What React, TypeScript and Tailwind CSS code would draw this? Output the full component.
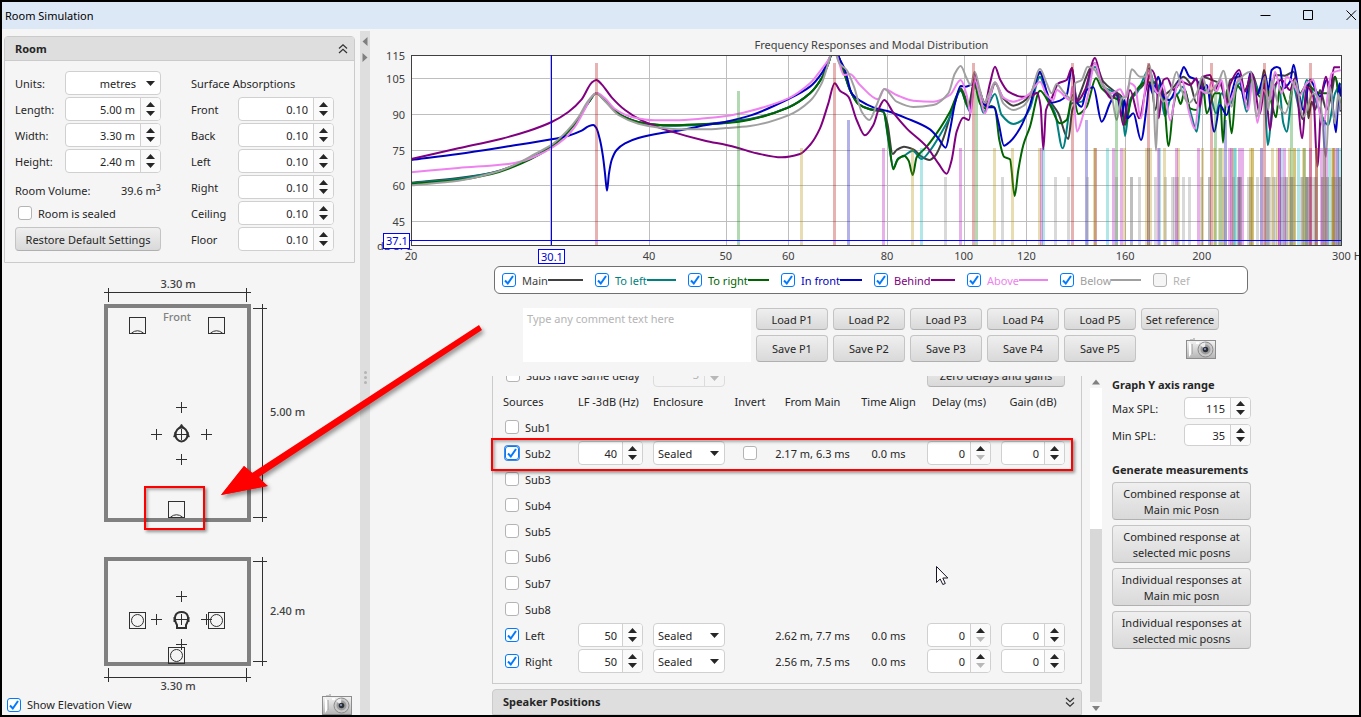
import { useState, type ReactNode } from "react";

/* ---------- controls ---------- */

function Tri({ dir, dim }: { dir: "up" | "down"; dim?: boolean }) {
  return (
    <svg width="9" height="5" viewBox="0 0 9 5" className="block" aria-hidden="true">
      <path d={dir === "up" ? "M0 5L4.5 0L9 5Z" : "M0 0L4.5 5L9 0Z"} fill={dim ? "#b8b8b8" : "#262626"} />
    </svg>
  );
}

function Spinner({ label, value, size, downOff }: { label: string; value: string; size: string; downOff?: boolean }) {
  const [text, setText] = useState(value);
  return (
    <span className={`flex overflow-hidden rounded border border-[#d0d0d0] bg-white ${size}`}>
      <input
        aria-label={label}
        value={text}
        onChange={(e) => setText(e.target.value)}
        className="w-full min-w-0 flex-1 bg-transparent pt-px pr-[5px] text-right outline-none"
      />
      <span className="flex w-5 shrink-0 flex-col items-center justify-center gap-1 border-l border-[#d0d0d0] bg-[#fafafa]">
        <button aria-label={`${label} up`}><Tri dir="up" /></button>
        <button aria-label={`${label} down`}><Tri dir="down" dim={downOff} /></button>
      </span>
    </span>
  );
}

function Picker({ label, value, options, size, right }: { label: string; value: string; options: string[]; size: string; right?: boolean }) {
  return (
    <span className={`relative flex items-center rounded border border-[#d0d0d0] bg-white ${size}`}>
      <select
        aria-label={label}
        defaultValue={value}
        className={`h-full w-full appearance-none bg-transparent pt-px outline-none ${right ? "pr-6 [text-align-last:right]" : "pl-1"}`}
      >
        {options.map((o) => <option key={o}>{o}</option>)}
      </select>
      <span className="pointer-events-none absolute right-[5px]"><Tri dir="down" /></span>
    </span>
  );
}

function Check({ on, children, label, tone, disabled, focus }: { on?: boolean; children?: ReactNode; label?: string; tone?: string; disabled?: boolean; focus?: boolean }) {
  const [checked, setChecked] = useState(!!on);
  return (
    <label className={`flex items-center gap-1.5 whitespace-nowrap ${tone ?? ""}`}>
      <span className={`relative flex h-3.5 w-3.5 shrink-0 rounded-[3px] ${focus ? "ring-1 ring-[#4a86d8]" : ""}`}>
        <input
          type="checkbox"
          aria-label={label}
          disabled={disabled}
          checked={checked}
          onChange={(e) => setChecked(e.target.checked)}
          className="h-3.5 w-3.5 appearance-none rounded-[3px] border border-[#b4b4b4] bg-white checked:border-[#007aff] disabled:bg-[#f5f5f5]"
        />
        {checked && (
          <svg viewBox="0 0 14 14" className="pointer-events-none absolute h-3.5 w-3.5" fill="none" stroke="#007aff" strokeWidth="2" aria-hidden="true">
            <path d="M3 7.5L5.8 10.5L11 3" />
          </svg>
        )}
      </span>
      {children && <span className="pt-px">{children}</span>}
    </label>
  );
}

function Btn({ children, className }: { children: ReactNode; className: string }) {
  return (
    <button className={`rounded border border-[#c4c4c4] border-b-[#b0b0b0] bg-linear-to-b from-[#efefef] to-[#d9d9d9] pt-px whitespace-nowrap ${className}`}>
      {children}
    </button>
  );
}

function Camera() {
  return (
    <svg width="30" height="21" viewBox="0 0 30 21" aria-hidden="true">
      <defs>
        <linearGradient id="cam" x1="0" y1="0" x2="0" y2="1">
          <stop offset="0" stopColor="#f4f4f4" />
          <stop offset="1" stopColor="#b4b4b4" />
        </linearGradient>
      </defs>
      <path d="M4 1h3v-1h2v2h-5z" fill="#c4c4c4" />
      <rect x="0.5" y="2.5" width="29" height="18" fill="url(#cam)" stroke="#8c8c8c" />
      <path d="M3 4v15L6 15V7Z" fill="#fff" />
      <path d="M6 6v10" stroke="#9a9a9a" />
      <rect x="10" y="4" width="3" height="2" fill="#fff" />
      <circle cx="19.5" cy="11.5" r="7.5" fill="#c9c9c9" stroke="#8a8a8a" />
      <circle cx="19.5" cy="11.5" r="5" fill="#9c9c9c" />
      <path d="M19.5 11.5L14 7A7 7 0 0 1 19 4.500Z" fill="#ececec" />
      <circle cx="19.5" cy="11.5" r="2.800" fill="#2c3038" />
      <circle cx="19" cy="11" r="1" fill="#8fa4c8" />
    </svg>
  );
}

function Chevrons({ up }: { up?: boolean }) {
  return (
    <svg width="10" height="10" viewBox="0 0 10 10" fill="none" stroke="#333" strokeWidth="1.2" aria-hidden="true">
      <path d={up ? "M1 4.5L5 0.8L9 4.5M1 9L5 5.300L9 9" : "M1 1L5 4.700L9 1M1 5.500L5 9.200L9 5.500"} />
    </svg>
  );
}

/* ---------- frequency response chart ---------- */

type Pt = [number, number];

const parse = (s: string, dx: number): Pt[] =>
  s.trim().split(/\s+/).map((p) => {
    const [x, y] = p.split(",").map(Number);
    return [x + dx, y];
  });

/* Horizontal-tangent-limited cubic so that notches stay sharp without overshoot. */
function smooth(p: Pt[]): string {
  const n = p.length;
  const d = p.slice(1).map((q, i) => (q[1] - p[i][1]) / (q[0] - p[i][0] || 1));
  const m = p.map((_, i) => {
    if (i === 0) return d[0];
    if (i === n - 1) return d[n - 2];
    if (d[i - 1] * d[i] <= 0) return 0;
    return (2 * d[i - 1] * d[i]) / (d[i - 1] + d[i]);
  });
  let out = `M${p[0][0]} ${p[0][1]}`;
  for (let i = 0; i < n - 1; i++) {
    const h = (p[i + 1][0] - p[i][0]) / 3;
    out += `C${p[i][0] + h} ${p[i][1] + m[i] * h} ${p[i + 1][0] - h} ${p[i + 1][1] - m[i + 1] * h} ${p[i + 1][0]} ${p[i + 1][1]}`;
  }
  return out;
}

const CURVES: { name: string; color: string; low: string; mid: string; high: string }[] = [
  {
    name: "Main", color: "#404040",
    low: "108,458 250,444 350,428 440,397 530,348 600,280 640,218 664,190 690,212 740,257 800,278 880,286",
    mid: "15,283 79,275 150,267 265,232 330,190 365,145 385,100 395,70 405,58 415,78 430,120 450,180 475,222 510,238 550,245 562,280 578,372 590,360 612,350 640,358 665,380 688,390 705,378 730,325 750,260 770,200 782,175 795,200 808,230 824,150 840,190 855,228 870,200 885,160 910,205 940,227 970,215",
    high: "0,195 30,130 55,205 85,250 115,327 127,240 140,215 195,100 220,155 255,185 275,200 285,280 305,200 340,165 358,115 376,240 390,170 400,195 425,178 460,140 480,160 500,220 517,140 545,150 570,160 590,210 600,150 630,140 650,230 665,130 690,190 702,120 720,210 735,135 765,137 791,125 808,225 818,268 830,180 835,265 845,215 855,240 870,180 890,240 905,190 915,140 932,245",
  },
  {
    name: "To left", color: "#008080",
    low: "108,460 250,446 350,429 440,398 530,349 600,281 640,218 664,190 690,212 740,257 800,279 880,287",
    mid: "15,284 79,278 150,268 265,232 330,190 365,145 385,100 395,70 405,58 415,78 430,120 450,180 475,222 510,238 550,245 565,330 580,412 595,385 612,378 638,362 665,387 690,362 720,315 750,260 782,182 800,225 810,245 824,160 840,215 850,248 865,225 885,192 905,255 940,282 965,272",
    high: "0,235 30,140 50,200 75,250 98,355 125,220 155,215 195,110 220,170 258,190 275,210 285,318 300,210 320,190 358,120 380,190 390,160 400,240 405,258 420,210 430,200 445,190 458,170 485,260 500,305 515,200 535,175 558,250 575,190 595,230 630,160 650,245 668,150 690,190 702,160 713,345 730,200 745,150 760,280 770,305 790,170 810,240 830,150 860,220 895,285 915,190 932,160",
  },
  {
    name: "To right", color: "#006400",
    low: "108,462 250,450 350,432 440,400 530,350 600,281 640,218 664,190 690,212 740,257 800,278 880,286",
    mid: "15,282 79,279 150,269 265,233 330,190 365,145 385,100 395,70 405,58 415,78 430,120 450,180 475,222 510,238 550,245 566,330 580,418 592,390 612,377 626,392 638,435 650,382 680,350 720,295 750,245 782,180 805,230 822,160 840,220 855,235 875,228 885,235 898,330 912,380 930,388 944,498 955,420 970,345",
    high: "0,290 30,182 60,225 90,280 110,270 128,195 145,252 170,230 198,145 215,175 245,200 275,215 285,285 305,205 350,155 370,160 385,145 400,190 416,348 430,230 440,195 452,222 465,180 480,235 500,240 517,150 530,250 555,190 570,190 579,338 590,180 605,310 620,165 640,185 665,150 690,200 705,150 725,220 738,262 750,170 775,225 791,150 810,190 830,165 870,190 895,190 915,140 932,230",
  },
  {
    name: "In front", color: "#0000c0",
    low: "108,390 250,372 400,349 530,328 580,317 620,302 640,289 655,285 664,294 675,330 684,380 690,430 696,482 702,430 710,390 725,360 750,340 790,324 860,309 920,300",
    mid: "15,286 79,275 150,257 265,207 330,170 365,130 385,92 395,70 405,55 418,85 435,120 455,190 480,212 520,232 562,243 620,265 690,298 715,325 737,353 750,300 765,220 782,168 797,170 812,165 824,155 838,180 852,220 865,232 882,232 895,275 912,347 930,335 960,295",
    high: "0,225 30,125 50,185 65,218 90,212 110,195 126,115 140,215 155,230 170,180 190,172 215,275 240,220 258,190 265,210 275,260 283,210 292,265 310,250 333,330 350,230 358,160 368,190 385,140 400,200 418,210 440,170 455,125 461,111 478,140 500,150 517,180 530,165 553,305 570,225 590,255 605,190 625,130 645,215 662,125 680,195 705,135 715,180 725,120 740,111 750,115 760,175 780,155 791,104 805,180 820,240 840,150 870,200 890,150 905,200 918,307 928,160 932,200",
  },
  {
    name: "Behind", color: "#800080",
    low: "108,387 250,355 380,326 460,303 530,276 580,246 620,208 650,158 664,150 680,163 710,202 750,240 800,271 880,302",
    mid: "15,332 79,345 112,353 170,370 245,382 300,372 330,345 360,295 385,220 404,160 420,182 445,200 470,270 495,316 520,285 537,235 553,210 580,248 620,295 680,350 715,400 740,431 755,390 770,305 790,263 807,270 824,130 838,180 855,218 870,160 885,110 900,148 925,185 965,200",
    high: "0,200 22,188 32,230 40,358 48,240 65,205 85,160 110,150 126,113 140,215 165,180 195,84 215,155 245,205 262,190 280,285 300,180 328,265 345,190 365,120 380,160 386,265 400,150 412,145 430,180 455,155 480,165 500,145 510,230 520,140 540,135 555,180 570,150 590,220 600,165 628,120 645,185 665,130 690,250 705,160 720,300 735,165 755,150 780,180 795,145 817,325 830,170 850,200 862,410 875,200 888,140 900,190 912,112 930,112",
  },
  {
    name: "Above", color: "#ee82ee",
    low: "108,427 250,414 400,402 440,394 490,375 530,354 570,325 600,290 630,237 650,200 666,189 690,205 720,237 770,261 840,271 900,271",
    mid: "15,265 79,258 150,243 265,205 330,160 365,117 385,90 403,55 415,90 432,135 450,132 480,165 535,208 553,177 590,195 640,212 700,215 750,195 782,150 800,195 812,250 824,150 840,200 855,250 870,200 885,157 910,203 940,215 970,205",
    high: "0,190 30,155 50,195 70,210 80,180 120,210 127,170 141,305 155,270 175,190 195,100 215,160 245,190 270,178 285,200 300,160 315,170 332,265 355,120 370,170 385,190 400,165 421,272 440,170 455,150 478,250 495,297 510,180 530,190 545,155 560,185 575,150 590,230 610,190 628,145 655,240 668,150 682,278 700,180 720,210 735,125 755,190 770,140 790,160 810,195 830,160 850,150 865,230 880,290 895,180 905,130 932,120",
  },
  {
    name: "Below", color: "#a0a0a0",
    low: "108,466 250,452 350,430 420,404 480,372 530,344 575,304 610,262 640,212 664,191 690,214 730,255 790,281 860,294 920,298",
    mid: "15,298 79,294 150,288 265,256 330,213 365,160 385,100 400,55 418,100 440,120 462,170 485,245 508,270 530,225 553,177 590,215 640,231 700,225 745,190 765,130 782,108 800,145 812,165 824,125 840,180 853,218 870,185 885,157 910,220 940,240 970,228",
    high: "0,200 30,117 50,160 65,190 80,162 100,185 130,210 135,160 155,150 173,110 190,115 215,160 245,200 260,270 275,205 290,200 305,118 330,140 345,140 357,103 370,190 378,362 386,190 400,215 420,190 440,125 455,180 475,220 500,190 517,140 535,190 568,150 580,122 605,230 620,160 662,125 680,260 705,140 715,240 725,150 745,225 765,250 785,190 795,150 820,260 850,190 870,210 888,380 900,170 915,280 925,190 932,240",
  },
];

const PATHS = CURVES.map((c) => ({
  ...c,
  d: smooth([...parse(c.low, 0), ...parse(c.mid, 975), ...parse(c.high, 1965)]),
}));

const xOf = (f: number) => 411 + (930 * Math.log(f / 20)) / Math.log(15);
const yOf = (db: number) => 55.5 + (115 - db) * 2.375;

/* Room modes for a 5.0 x 3.3 x 2.4 m room, coloured by family. */
const MODES = (() => {
  const out: { f: number; top: number; color: string }[] = [];
  for (let l = 0; l < 10; l++)
    for (let w = 0; w < 7; w++)
      for (let h = 0; h < 5; h++) {
        const f = 171.5 * Math.hypot(l / 5, w / 3.3, h / 2.4);
        if (f < 20 || f > 300) continue;
        const kind = (l ? 1 : 0) + (w ? 2 : 0) + (h ? 4 : 0);
        const style: Record<number, [number, string]> = {
          1: [63, "#b00000"], 2: [91, "#008000"], 4: [120, "#0000b4"],
          3: [148, "#b08c00"], 5: [148, "#b000b8"], 6: [148, "#00b0b0"], 7: [177, "#808080"],
        };
        out.push({ f, top: style[kind][0], color: style[kind][1] });
      }
  return out;
})();

function ResponseChart() {
  return (
    <svg viewBox="370 36 989 229" className="block h-auto w-full" role="img" aria-label="Frequency Responses and Modal Distribution" fontSize="11" fill="#404040">
      <clipPath id="plot"><rect x="411" y="55" width="931" height="190" /></clipPath>
      <rect x="411" y="55" width="931" height="190" fill="#fff" />
      <g stroke="#bebebe">
        {[30, 40, 50, 60, 80, 100, 120, 160, 200].map((f) => <path key={f} d={`M${Math.round(xOf(f)) + 0.5} 55V245`} />)}
        {[105, 90, 75, 60, 45].map((v) => <path key={v} d={`M411 ${Math.round(yOf(v)) - 0.5}H1341`} />)}
      </g>
      <g clipPath="url(#plot)">
        <g transform="translate(375 30) scale(0.33333)" fill="none" strokeWidth="6" strokeLinejoin="round">
          {PATHS.map((c) => <path key={c.name} d={c.d} stroke={c.color} />)}
        </g>
        {MODES.map((m, i) => (
          <rect key={i} x={Math.round(xOf(m.f) - 1.5)} y={m.top} width="3" height={245 - m.top} fill={m.color} fillOpacity="0.3" />
        ))}
      </g>
      <rect x="411.5" y="55.5" width="930" height="190" fill="none" stroke="#404040" />
      <path d="M551.5 55V245M410 240.500H1341" stroke="#0000ff" />
      <text x="871.500" y="49" textAnchor="middle">Frequency Responses and Modal Distribution</text>
      <g textAnchor="end">
        {[115, 105, 90, 75, 60, 45].map((v) => <text key={v} x="405" y={yOf(v) + 4}>{v}</text>)}
      </g>
      <g textAnchor="middle">
        {[20, 40, 50, 60, 80, 100, 120, 160, 200].map((f) => <text key={f} x={xOf(f)} y="260">{f}</text>)}
      </g>
      <text x="1332" y="260">300 Hz</text>
      <text x="377" y="250">dB SPL</text>
      <g fill="#fff" stroke="#0000ff">
        <rect x="383.5" y="233.500" width="26" height="15" />
        <rect x="538.500" y="249.500" width="26" height="14" />
      </g>
      <g fill="#0000e0" textAnchor="middle">
        <text x="397" y="245">37.1</text>
        <text x="552" y="261">30.1</text>
      </g>
    </svg>
  );
}

/* ---------- room plan ---------- */

function Plus({ x, y, r = 5.5 }: { x: number; y: number; r?: number }) {
  return <path d={`M${x - r} ${y}H${x + r}M${x} ${y - r}V${y + r}`} />;
}

function RoomViews() {
  return (
    <svg viewBox="2 264 358 430" className="mt-px block h-auto w-full" role="img" aria-label="Room plan and elevation" fill="none" stroke="#303030" fontSize="11">
      <path d="M104 292.500H251M108.500 288V302M246.500 288V302" />
      <path d="M262.500 304V522M253 308.500H267M253 517.500H267" />
      <path d="M262.500 557V666M253 561.500H267M253 661.500H267" />
      <path d="M104 677.500H251M108.500 668V682M246.500 668V682" />
      <rect x="106" y="306" width="143" height="214" stroke="#808080" strokeWidth="4" />
      <rect x="106" y="559" width="143" height="105" stroke="#808080" strokeWidth="4" />

      {[[129, 317], [208, 317], [168, 501]].map(([x, y]) => (
        <g key={x}>
          <rect x={x + 0.5} y={y + 0.5} width="16" height="16" />
          <path d={`M${x + 2.5} ${y + 16}Q${x + 8.5} ${y + 11.5} ${x + 14.5} ${y + 16}`} />
        </g>
      ))}
      <Plus x={181.5} y={407.5} />
      <Plus x={156.5} y={434.5} />
      <Plus x={206.5} y={434.5} />
      <Plus x={181.5} y={459.5} />
      <Plus x={181.5} y={434.5} />
      <ellipse cx="181.5" cy="434.500" rx="6" ry="7" strokeWidth="2" />
      <path d="M179 427.500L181.500 424L184 427.500ZM175 432L173.500 437H176ZM188 432L189.500 437H187Z" fill="#303030" strokeWidth="0.5" />

      {[[129, 612], [208, 612], [168, 647]].map(([x, y]) => (
        <g key={x}>
          <rect x={x + 0.5} y={y + 0.5} width="16" height="16" />
          <circle cx={x + 8.5} cy={y + 8.5} r="6" />
        </g>
      ))}
      <Plus x={181.5} y={596.5} />
      <Plus x={156.5} y={619.5} />
      <Plus x={206.5} y={619.5} />
      <Plus x={181.5} y={644.5} />
      <Plus x={181.5} y={619.5} />
      <path d="M177 628V625C173 618 175 612 181.500 612S190 618 186 625V628Z" strokeWidth="2" />
      <path d="M174.500 617V622M188.500 617V622" strokeWidth="2" />

      <g fill="#404040" stroke="none" fontWeight="500">
        <text x="178" y="288" textAnchor="middle">3.30 m</text>
        <text x="270" y="416">5.00 m</text>
        <text x="270" y="615">2.40 m</text>
        <text x="178" y="690" textAnchor="middle">3.30 m</text>
        <text x="177" y="321" textAnchor="middle" fill="#808080">Front</text>
      </g>
    </svg>
  );
}

/* ---------- page ---------- */

const LEGEND = [
  { name: "Main", tone: "text-[#404040]" },
  { name: "To left", tone: "text-[#008080]" },
  { name: "To right", tone: "text-[#006400]" },
  { name: "In front", tone: "text-[#0000c0]" },
  { name: "Behind", tone: "text-[#800080]" },
  { name: "Above", tone: "text-[#ee82ee]" },
  { name: "Below", tone: "text-[#a0a0a0]" },
];

const SOURCES = [
  { name: "Sub1" },
  { name: "Sub2", lf: "40", dist: "2.17 m, 6.3 ms", invert: true },
  { name: "Sub3" }, { name: "Sub4" }, { name: "Sub5" }, { name: "Sub6" }, { name: "Sub7" }, { name: "Sub8" },
  { name: "Left", lf: "50", dist: "2.62 m, 7.7 ms" },
  { name: "Right", lf: "50", dist: "2.56 m, 7.5 ms" },
];

function RoomPanel() {
  return (
    <section className="mx-[2px] mr-[5px] rounded-t border border-[#cbcbcb]">
      <header className="flex h-6 items-center justify-between border-b border-[#cbcbcb] bg-[#dedede] pr-[6px] pl-[10px]">
        <h2 className="font-bold">Room</h2>
        <button aria-label="Collapse Room"><Chevrons up /></button>
      </header>
      <div className="flex gap-[30px] px-[10px] pt-[10px] pb-[11px]">
        <div className="flex w-[146px] flex-col gap-[2px]">
          <div className="flex h-6 items-center justify-between">
            <span className="pt-px">Units:</span>
            <Picker label="Units" value="metres" options={["metres", "feet"]} size="h-6 w-24" right />
          </div>
          {[["Length", "5.00 m"], ["Width", "3.30 m"], ["Height", "2.40 m"]].map(([n, v]) => (
            <div key={n} className="flex h-6 items-center justify-between">
              <span className="pt-px">{n}:</span>
              <Spinner label={n} value={v} size="h-6 w-24" />
            </div>
          ))}
          <div className="flex h-6 items-end justify-between leading-4">
            <span>Room Volume:</span>
            <span>39.6 m<sup className="text-[9px]">3</sup></span>
          </div>
          <div className="flex h-6 items-center pl-[3px]"><Check>Room is sealed</Check></div>
          <Btn className="h-6">Restore Default Settings</Btn>
        </div>
        <div className="flex w-[143px] flex-col gap-[2px]">
          <div className="flex h-6 items-center pt-px whitespace-nowrap">Surface Absorptions</div>
          {["Front", "Back", "Left", "Right", "Ceiling", "Floor"].map((n) => (
            <div key={n} className="flex h-6 items-center justify-between">
              <span className="pt-px">{n}</span>
              <Spinner label={`${n} absorption`} value="0.10" size="h-6 w-24" />
            </div>
          ))}
        </div>
      </div>
    </section>
  );
}

function SourcesTable() {
  return (
    <table className="w-[567px] table-fixed border-collapse text-center whitespace-nowrap">
      <colgroup>
        <col className="w-[75px]" /><col className="w-[75px]" /><col className="w-[77px]" /><col className="w-[40px]" />
        <col className="w-[85px]" /><col className="w-[67px]" /><col className="w-[74px]" /><col className="w-[74px]" />
      </colgroup>
      <thead>
        <tr className="h-[26px]">
          <th className="p-0 pt-px text-left font-normal">Sources</th>
          <th className="p-0 pt-px text-left font-normal">LF -3dB (Hz)</th>
          <th className="p-0 pt-px text-left font-normal">Enclosure</th>
          <th className="p-0 pt-px font-normal">Invert</th>
          <th className="p-0 pt-px font-normal">From Main</th>
          <th className="p-0 pt-px font-normal">Time Align</th>
          <th className="p-0 pt-px font-normal">Delay (ms)</th>
          <th className="p-0 pt-px font-normal">Gain (dB)</th>
        </tr>
      </thead>
      <tbody>
        {SOURCES.map((s) => (
          <tr key={s.name} className="h-[26px]">
            <td className="p-0 pl-[2px]"><Check on={!!s.lf} focus={s.name === "Sub2"}>{s.name}</Check></td>
            {s.lf ? (
              <>
                <td className="p-0"><Spinner label={`${s.name} LF`} value={s.lf} size="h-6 w-[65px]" /></td>
                <td className="p-0"><Picker label={`${s.name} enclosure`} value="Sealed" options={["Sealed", "Ported"]} size="h-6 w-[72px]" /></td>
                <td className="p-0 pl-[13px]">{s.invert && <Check label={`Invert ${s.name}`} />}</td>
                <td className="p-0 pt-px">{s.dist}</td>
                <td className="p-0 pt-px">0.0 ms</td>
                <td className="p-0 pl-[5px]"><Spinner label={`${s.name} delay`} value="0" size="h-6 w-16" downOff /></td>
                <td className="p-0 pl-[5px]"><Spinner label={`${s.name} gain`} value="0" size="h-6 w-16" /></td>
              </>
            ) : <td colSpan={7} className="p-0" />}
          </tr>
        ))}
      </tbody>
    </table>
  );
}

export default function App() {
  return (
    <div className="relative flex h-screen flex-col overflow-hidden border-2 border-black bg-[#f5f5f5] font-['Noto_Sans','Open_Sans',sans-serif] text-[11px] leading-4 text-[#262626]">
      <header className="flex h-[27px] shrink-0 items-center justify-between bg-[#dde8f7] pl-[3px] text-black">
        <h1>Room Simulation</h1>
        <div className="flex gap-8 pr-[2px]">
          {["M0.500 5.500H10.500", "M0.500 0.500H9.500V9.500H0.500Z", "M0.500 0.500L10 10M10 0.500L0.500 10"].map((d, i) => (
            <button key={d} aria-label={["Minimise", "Maximise", "Close"][i]} className="flex h-[27px] w-[11px] items-center">
              <svg width="11" height="11" viewBox="0 0 11 11" fill="none" stroke="#000" className="block"><path d={d} /></svg>
            </button>
          ))}
        </div>
      </header>

      <div className="flex min-h-0 flex-1">
        <aside className="flex w-[358px] shrink-0 flex-col pt-[7px]">
          <RoomPanel />
          <RoomViews />
          <div className="flex items-center justify-between pr-2 pl-[5px]">
            <Check on>Show Elevation View</Check>
            <button aria-label="Save room image"><Camera /></button>
          </div>
        </aside>

        <div className="mt-[2px] flex w-[10px] shrink-0 flex-col items-center bg-[#dedede] pt-[6px]">
          <svg width="6" height="25" viewBox="0 0 6 25" fill="#808080" aria-hidden="true"><path d="M5.500 0V9L0.500 4.500ZM0.500 16V25L5.500 20.500Z" /></svg>
          <div className="flex flex-1 flex-col items-center justify-center gap-[2px] pb-[22px]">
            <span className="h-[3px] w-[3px] rounded-full bg-[#b4b4b4]" />
            <span className="h-[3px] w-[3px] rounded-full bg-[#b4b4b4]" />
            <span className="h-[3px] w-[3px] rounded-full bg-[#b4b4b4]" />
          </div>
        </div>

        <main className="flex min-w-0 flex-1 flex-col pt-[7px]">
          <ResponseChart />

          <div role="group" aria-label="Traces" className="mt-[1px] ml-[124px] flex h-7 w-[754px] shrink-0 items-center rounded-md border border-[#707070] bg-white pl-[7px]">
            {LEGEND.map((l) => (
              <div key={l.name} className={`flex w-[93px] items-center pr-[12px] ${l.tone}`}>
                <Check on>{l.name}</Check>
                <span className="h-[2px] flex-1 bg-current" />
              </div>
            ))}
            <Check disabled tone="text-[#b4b4b4]">Ref</Check>
          </div>

          <div className="mt-[14px] ml-[153px] flex shrink-0 gap-[5px]">
            <textarea aria-label="Comment" placeholder="Type any comment text here" className="h-[54px] w-[228px] resize-none bg-white px-1 py-[3px] outline-none placeholder:text-[#b4b4b4]" />
            <div className="flex flex-col gap-[5px]">
              <div className="flex gap-[5px]">
                {[1, 2, 3, 4, 5].map((n) => <Btn key={n} className="h-[22px] w-[72px]">Load P{n}</Btn>)}
                <Btn className="h-[22px] w-[78px]">Set reference</Btn>
              </div>
              <div className="flex gap-[5px]">
                {[1, 2, 3, 4, 5].map((n) => <Btn key={n} className="h-[27px] w-[72px]">Save P{n}</Btn>)}
                <button aria-label="Save graph image" className="flex w-[78px] items-center justify-center pl-[42px]"><Camera /></button>
              </div>
            </div>
          </div>

          <div className="mt-[14px] ml-[122px] flex min-h-0 flex-1">
            <div className="flex w-[590px] flex-col gap-[5px] overflow-hidden">
              <div className="shrink-0 border border-t-0 border-[#cbcbcb] px-[10px] pb-[9px]">
                <div className="-mt-[14px] flex h-[26px] items-center">
                  <div className="w-[150px] pl-[3px]"><Check>Subs have same delay</Check></div>
                  <div className="flex h-6 w-[72px] rounded border border-[#dcdcdc] text-[#b4b4b4]">
                    <input aria-label="Sub count" defaultValue="3" disabled className="w-full min-w-0 flex-1 pr-[5px] text-right" />
                    <span className="flex w-5 shrink-0 items-end justify-center border-l border-[#dcdcdc] pb-[5px]"><Tri dir="down" dim /></span>
                  </div>
                  <Btn className="ml-[202px] h-6 w-[138px]">Zero delays and gains</Btn>
                </div>
                <SourcesTable />
              </div>
              <header className="flex h-[26px] shrink-0 items-center justify-between rounded-t border border-[#cbcbcb] bg-[#dedede] pr-[6px] pl-[10px]">
                <h2 className="font-bold">Speaker Positions</h2>
                <button aria-label="Expand Speaker Positions"><Chevrons /></button>
              </header>
            </div>

            <div className="ml-2 flex w-3 flex-col items-center">
              <svg width="12" height="12" viewBox="0 0 12 12" className="shrink-0" aria-hidden="true"><path d="M2 8.500L6 3.500L10 8.500Z" fill="#808080" /></svg>
              <div className="flex w-full flex-1 flex-col justify-end bg-white"><div className="h-[55%] bg-[#d8d8d8]" /></div>
              <svg width="12" height="13" viewBox="0 0 12 13" className="shrink-0" aria-hidden="true"><path d="M2 4L6 9L10 4Z" fill="#808080" /></svg>
            </div>

            <div className="ml-[10px] flex w-[139px] flex-col">
              <h3 className="mb-1 pt-px font-bold whitespace-nowrap">Graph Y axis range</h3>
              <div className="flex flex-col gap-[5px]">
                {[["Max SPL", "115"], ["Min SPL", "35"]].map(([n, v]) => (
                  <div key={n} className="flex h-[22px] items-center justify-between">
                    <span className="pt-px">{n}:</span>
                    <Spinner label={n} value={v} size="h-[22px] w-[67px]" />
                  </div>
                ))}
              </div>
              <h3 className="mt-[15px] mb-1 pt-px font-bold whitespace-nowrap">Generate measurements</h3>
              <div className="flex flex-col gap-[5px]">
                {[["Combined response at", "Main mic Posn"], ["Combined response at", "selected mic posns"], ["Individual responses at", "Main mic posn"], ["Individual responses at", "selected mic posns"]].map(([a, b]) => (
                  <Btn key={a + b} className="h-[38px] leading-4">{a}<br />{b}</Btn>
                ))}
              </div>
            </div>
          </div>
        </main>
      </div>

      {/* callouts and pointer drawn over the window */}
      <div className="pointer-events-none absolute top-[436px] left-[489px] h-[33px] w-[582px] border-2 border-[#fe0000] shadow-[2px_2px_3px_rgba(0,0,0,0.4),inset_2px_2px_3px_rgba(0,0,0,0.3)]" />
      <div className="pointer-events-none absolute top-[484px] left-[142px] h-[44px] w-[61px] border-2 border-[#fe0000] shadow-[2px_2px_3px_rgba(0,0,0,0.4),inset_2px_2px_3px_rgba(0,0,0,0.3)]" />
      <svg className="pointer-events-none absolute top-[316px] left-[210px] drop-shadow-[2px_3px_2px_rgba(0,0,0,0.4)]" width="280" height="190" viewBox="212 318 280 190" aria-hidden="true">
        <path d="M479 325L482 330L259 477L267 486L221 495L244 466L252 473Z" fill="#fe0000" />
        <path d="M221 495L244 466L268 486Z" fill="#fe0000" />
      </svg>
      <svg className="pointer-events-none absolute top-[564px] left-[934px]" width="13" height="20" viewBox="0 0 13 20" aria-hidden="true">
        <path d="M0.500 0.500V16.500L4.200 13L6.800 18.500L9.300 17.500L6.800 12H11.800Z" fill="#fff" stroke="#1a1426" />
      </svg>
    </div>
  );
}
